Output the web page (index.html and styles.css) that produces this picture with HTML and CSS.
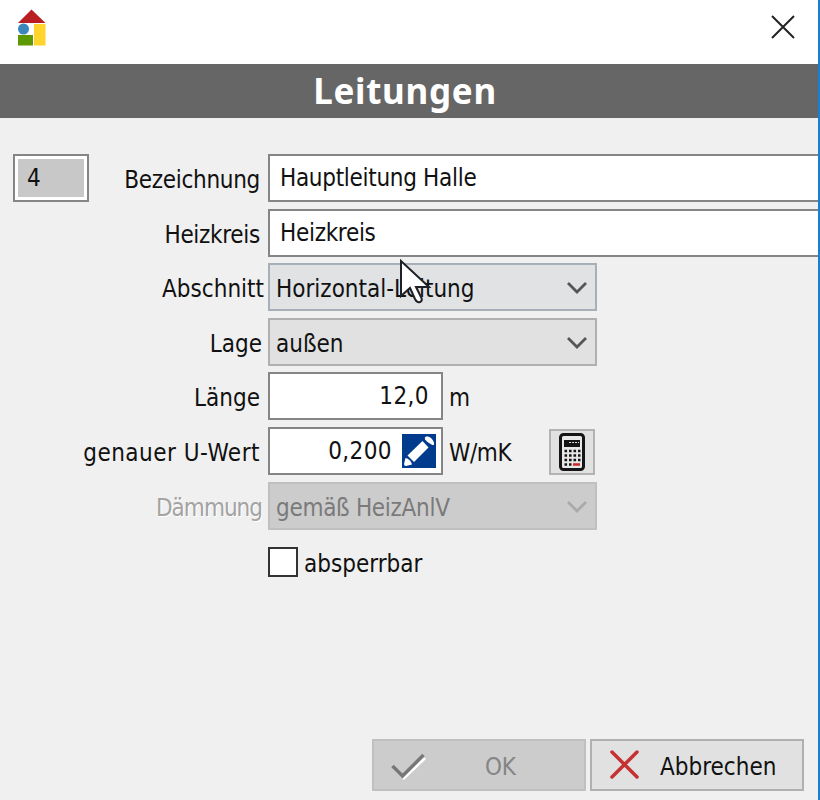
FILE: index.html
```html
<!DOCTYPE html>
<html lang="de">
<head>
<meta charset="utf-8">
<title>Leitungen</title>
<link rel="stylesheet" href="styles.css">
</head>
<body>
<main class="window">
  <header class="titlebar">
    <svg class="logo" width="30" height="38" viewBox="0 0 30 38"><path fill="#b91f22" d="M1 14 14.500.5 28.500 14z"/><path fill="#ffd42d" d="M17 15h11.500v21.500H17z"/><path fill="#5d9900" d="M1 26h15v10.500H1z"/><circle cx="6.500" cy="20" r="5.500" fill="#3b87bd"/></svg>
    <svg class="close" width="24" height="24" viewBox="0 0 24 24"><path d="m1 1 22 22M23 1 1 23" fill="none" stroke="#222" stroke-width="2"/></svg>
  </header>
  <h1 class="heading"><span>Leitungen</span></h1>
  <form class="form">
    <div class="row"><div class="number"><span>4</span></div><label class="label l4">Bezeichnung</label><div class="field wide"><span>Hauptleitung Halle</span></div></div>
    <div class="row"><label class="label l4">Heizkreis</label><div class="field wide"><span>Heizkreis</span></div></div>
    <div class="row"><label class="label l0 loose">Abschnitt</label><div class="select hot loose"><span>Horizontal-Leitung</span><svg class="chev" width="22" height="14" viewBox="0 0 22 14"><path d="m2 2 9 9 9-9"/></svg></div></div>
    <div class="row loose"><label class="label l2">Lage</label><div class="select"><span>außen</span><svg class="chev" width="22" height="14" viewBox="0 0 22 14"><path d="m2 2 9 9 9-9"/></svg></div></div>
    <div class="row"><label class="label l4 loose">Länge</label><div class="field value"><span>12,0</span></div><span class="unit">m</span></div>
    <div class="row"><label class="label l4 exact">genauer U-Wert</label><div class="field value edit"><span>0,200</span>
      <svg width="34" height="34" viewBox="0 0 34 34"><path fill="#003b8e" d="M0 0h34v34H0z"/><g fill="#fff"><path d="M5.500 21.500 20.500 7l6 6.500L12 28z"/><path d="M23 5.500q-1-2 1-3h2q4 1 6 6v2q-1 1-2.500 0l-4-2.500z"/><path d="M3.500 24q5 1 6.500 6.500L4 32q-2 0-2-2z"/></g></svg></div><span class="unit wmk">W/mK</span>
      <div class="calc"><svg width="26" height="38" viewBox="0 0 26 38"><rect x="1.500" y="1.500" width="23" height="35" rx="3" fill="#e8e8e8" stroke="#151515" stroke-width="3"/><path fill="#151515" d="M5 7h16v7H5z"/><path d="M10 9.500h10" stroke="#ddd" stroke-width="1" stroke-dasharray="2 1"/><path d="M5.500 18h16M5.500 22.500h16M5.500 27h16M5.500 31.500h7" stroke="#151515" stroke-width="2.600" stroke-dasharray="2.600 1.900"/><path d="M14 31.500h7" stroke="#d02b2b" stroke-width="2.600"/></svg></div></div>
    <div class="row off"><label class="label l2 tight">Dämmung</label><div class="select disabled"><span>gemäß HeizAnlV</span><svg class="chev" width="22" height="14" viewBox="0 0 22 14"><path d="m2 2 9 9 9-9"/></svg></div></div>
    <div class="check loose"><i class="box"></i><span>absperrbar</span></div>
  </form>
  <footer class="footer">
    <div class="btn dim"><svg width="36" height="30" viewBox="0 0 36 30"><path d="m3 15 10 10 21-20" fill="none" stroke="#fff" stroke-width="3"/><path d="m1.500 13 10 10 21-21" fill="none" stroke="#777" stroke-width="3.500"/></svg><span class="ok">OK</span></div>
    <div class="btn loose"><svg width="36" height="30" viewBox="0 0 36 30"><path d="m3 2 25 25M28 2 3 27" fill="none" stroke="#c43232" stroke-width="3.500" stroke-linecap="round"/></svg><span class="cancel">Abbrechen</span></div>
  </footer>
  <svg class="cursor" width="38" height="48" viewBox="0 0 38 48"><path d="M2 4v35l9-8 5 11q2 4 5 3t1-5l-5-10h13z" fill="#fff" stroke="#202027" stroke-width="2"/></svg>
</main>
</body>
</html>
```
FILE: styles.css
```css
* { box-sizing: border-box; }
body { margin: 0; }
svg { display: block; flex: none; }
.window {
  position: relative;
  display: flex;
  flex-direction: column;
  width: 820px;
  height: 800px;
  overflow: hidden;
  background: #f0f0f0;
  border-right: 2px solid #1b7fd0;
  font: 24px/48px "DejaVu Sans Condensed", "DejaVu Sans", sans-serif;
  font-stretch: condensed;
  letter-spacing: -.300px;
  color: #111;
  white-space: nowrap;
}
.loose { letter-spacing: 0; }
.tight { letter-spacing: -1px; }
.exact { letter-spacing: .500px; }
.wmk { letter-spacing: -.400px; }
.titlebar {
  display: flex;
  justify-content: space-between;
  height: 64px;
  padding: 9px 23px 0 17px;
  background: #fff;
}
.close { margin-top: 6px; }
.heading {
  height: 54px;
  margin: 0;
  padding-right: 8px;
  background: #666;
  color: #fff;
  text-align: center;
  font: bold 35px/54px "Noto Sans", sans-serif;
  letter-spacing: .700px;
}
.form {
  display: flex;
  flex-direction: column;
  gap: 6.600px;
  margin-top: 36px;
}
.row { display: flex; height: 48px; }
.label { width: 268px; text-align: right; line-height: 53px; }
.number + .label { width: 179px; }
.l4 { padding-right: 8px; }
.l0 { padding-right: 4px; }
.l2 { padding-right: 6px; }
.number {
  width: 76px;
  height: 48px;
  margin-left: 13px;
  padding: 3px;
  border: 2px solid #858585;
  background: #fff;
}
.number span {
  display: block;
  height: 38px;
  padding-left: 9px;
  background: #c8c8c8;
  line-height: 39px;
}
.field {
  height: 48px;
  border: 2px solid #858585;
  background: #fff;
  line-height: 45px;
}
.wide { flex: 1; padding-left: 10px; border-right: 0; }
.value {
  display: flex;
  justify-content: flex-end;
  width: 175px;
  padding-right: 12px;
  letter-spacing: .400px;
}
.edit { gap: 10px; padding-right: 5px; }
.edit svg { margin-top: 5px; }
.unit { width: 101px; padding-left: 6px; line-height: 53px; }
.calc {
  width: 46px;
  height: 46px;
  margin: 2px 0 0 5px;
  padding: 2px 8px;
  border: 2px solid #b3b3b3;
  background: #e1e1e1;
}
.select {
  display: flex;
  justify-content: space-between;
  width: 329px;
  height: 48px;
  padding: 0 7px 0 6px;
  border: 2px solid #b0b0b0;
  background: #e1e1e1;
  line-height: 49px;
}
.hot { border-color: #a7b0b9; background: #e0e2e4; }
.chev { margin-top: 16px; fill: none; stroke: #555; stroke-width: 2.800; }
.off .label { color: #a3a3a3; text-shadow: 1px 1px #fff; }
.disabled { border-color: #c0c0c0; background: #ccc; color: #7a7a7a; }
.disabled .chev { stroke: #aaa; }
.check { display: flex; gap: 6px; height: 30px; margin: 11px 0 0 268px; line-height: 35px; }
.box { width: 30px; height: 30px; border: 2px solid #333; background: #fff; }
.footer {
  display: flex;
  gap: 4px;
  justify-content: flex-end;
  margin-top: auto;
  padding: 0 14px 9px 0;
}
.btn {
  display: flex;
  width: 214px;
  height: 52px;
  padding: 9px 0 0 17px;
  border: 2px solid #b0b0b0;
  background: #e1e1e1;
  line-height: 34px;
}
.dim { border-color: #c0c0c0; background: #ccc; color: #858585; }
.dim svg { margin-top: 3px; }
.ok { margin-left: 58px; }
.cancel { margin-left: 15px; }
.cursor { position: absolute; left: 399px; top: 257px; }
```
